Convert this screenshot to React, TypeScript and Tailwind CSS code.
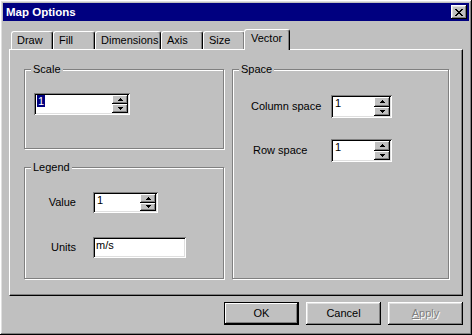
import React from 'react';

const raised =
  'shadow-[inset_-1px_-1px_0_#000,inset_1px_1px_0_#fff,inset_-2px_-2px_0_#808080,inset_2px_2px_0_#dfdfdf]';
const sunken =
  'shadow-[inset_1px_1px_0_#808080,inset_-1px_-1px_0_#fff,inset_2px_2px_0_#000,inset_-2px_-2px_0_#dfdfdf]';

const CloseGlyph = () => (
  <svg width="8" height="7" viewBox="0 0 8 7" shapeRendering="crispEdges">
    <path
      d="M0 0h2v1H0zM6 0h2v1H6zM1 1h2v1H1zM5 1h2v1H5zM2 2h4v1H2zM3 3h2v1H3zM2 4h4v1H2zM1 5h2v1H1zM5 5h2v1H5zM0 6h2v1H0zM6 6h2v1H6z"
      fill="#000"
    />
  </svg>
);

const Arrow = ({ up }: { up: boolean }) => (
  <svg width="5" height="3" viewBox="0 0 5 3" shapeRendering="crispEdges">
    {up ? (
      <path d="M2 0h1v1H2zM1 1h3v1H1zM0 2h5v1H0z" fill="#000" />
    ) : (
      <path d="M0 0h5v1H0zM1 1h3v1H1zM2 2h1v1H2z" fill="#000" />
    )}
  </svg>
);

interface SpinProps {
  width: string;
  height: string;
  value: string;
  selected?: boolean;
}

const SpinEdit: React.FC<SpinProps> = ({ width, height, value, selected }) => (
  <div className={`flex bg-white p-[2px] ${sunken} ${width} ${height}`}>
    <div className="flex-1 pl-[1px] leading-[13px]">
      <span className={selected ? 'bg-[#000080] text-white px-[1px]' : 'px-[1px]'}>{value}</span>
    </div>
    <div className="flex w-[16px] flex-col bg-[#c0c0c0]">
      {[true, false].map((up) => (
        <div
          key={String(up)}
          className="flex flex-1 items-center justify-center shadow-[inset_-1px_-1px_0_#000,inset_1px_1px_0_#fff,inset_-2px_-2px_0_#808080]"
        >
          <Arrow up={up} />
        </div>
      ))}
    </div>
  </div>
);

const GroupBox: React.FC<{ title: string; className: string; children?: React.ReactNode }> = ({
  title,
  className,
  children
}) => (
  <div
    className={`relative border border-[#808080] shadow-[inset_1px_1px_0_#fff,1px_1px_0_#fff] ${className}`}
  >
    <span className="absolute -top-[7px] left-[6px] bg-[#c0c0c0] px-[2px] leading-[13px]">{title}</span>
    {children}
  </div>
);

const tabs = [
  { label: 'Draw', w: 'w-[42px]' },
  { label: 'Fill', w: 'w-[42px]' },
  { label: 'Dimensions', w: 'w-[66px]' },
  { label: 'Axis', w: 'w-[42px]' },
  { label: 'Size', w: 'w-[42px]' }
];

const Button: React.FC<{ label: React.ReactNode; isDefault?: boolean; disabled?: boolean }> = ({
  label,
  isDefault,
  disabled
}) => (
  <div
    className={`flex h-[23px] w-[75px] items-center justify-center bg-[#c0c0c0] ${
      isDefault ? 'border border-black shadow-[inset_-1px_-1px_0_#000,inset_1px_1px_0_#fff,inset_-2px_-2px_0_#808080]' : raised
    } ${disabled ? 'text-[#808080] [text-shadow:1px_1px_0_#fff]' : 'text-black'}`}
  >
    {label}
  </div>
);

export default function App() {
  return (
    <div className="h-[335px] w-[472px] bg-[#c0c0c0] font-['Liberation_Sans',Arial,sans-serif] text-[11px] text-black">
      <div className={`flex h-full w-full flex-col p-[3px] ${raised}`}>
        {/* title bar */}
        <div className="flex h-[18px] items-center justify-between bg-[#000080] pl-[3px] pr-[2px]">
          <span className="text-[11.5px] font-bold leading-[14px] text-white">Map Options</span>
          <div className={`flex h-[14px] w-[16px] items-center justify-center bg-[#c0c0c0] ${raised}`}>
            <CloseGlyph />
          </div>
        </div>

        <div className="ml-[6px] mt-[8px] w-[454px]">
          {/* tabs */}
          <div className="relative z-10 flex h-[20px] items-end pl-[2px]">
            {tabs.map((t) => (
              <div
                key={t.label}
                className={`h-[18px] ${t.w} rounded-t-[3px] border-l border-t border-r border-l-white border-t-white border-r-black bg-[#c0c0c0] pl-[5px] pt-[2px] leading-[13px] shadow-[inset_-1px_0_0_#808080]`}
              >
                {t.label}
              </div>
            ))}
            <div className="-mb-[1px] -ml-[1px] h-[21px] w-[46px] rounded-t-[3px] border-l border-t border-r border-l-white border-t-white border-r-black bg-[#c0c0c0] pl-[6px] pt-[2px] leading-[13px] shadow-[inset_-1px_0_0_#808080]">
              Vector
            </div>
          </div>

          {/* panel */}
          <div className="flex h-[247px] gap-[8px] border border-b-black border-l-white border-r-black border-t-white pl-[14px] pt-[19px] shadow-[inset_-1px_-1px_0_#808080]">
            <div className="flex w-[200px] flex-col">
              <GroupBox title="Scale" className="h-[80px] pl-[9px] pt-[23px]">
                <SpinEdit width="w-[96px]" height="h-[22px]" value="1" selected />
              </GroupBox>
              <GroupBox title="Legend" className="mt-[18px] h-[112px] pt-[24px]">
                <div className="flex items-center">
                  <span className="w-[51px] text-right">Value</span>
                  <div className="ml-[17px]">
                    <SpinEdit width="w-[65px]" height="h-[21px]" value="1" />
                  </div>
                </div>
                <div className="mt-[24px] flex items-center">
                  <span className="w-[51px] text-right">Units</span>
                  <div
                    className={`ml-[17px] h-[21px] w-[93px] bg-white pl-[3px] pt-[2px] leading-[13px] ${sunken}`}
                  >
                    m/s
                  </div>
                </div>
              </GroupBox>
            </div>
            <GroupBox title="Space" className="h-[210px] w-[217px] pt-[25px]">
              <div className="flex items-center">
                <span className="w-[98px] pl-[18px]">Column space</span>
                <SpinEdit width="w-[61px]" height="h-[23px]" value="1" />
              </div>
              <div className="mt-[21px] flex items-center">
                <span className="w-[98px] pl-[20px]">Row space</span>
                <SpinEdit width="w-[61px]" height="h-[23px]" value="1" />
              </div>
            </GroupBox>
          </div>

          {/* buttons */}
          <div className="mt-[6px] flex justify-end gap-[7px]">
            <Button label="OK" isDefault />
            <Button label="Cancel" />
            <Button
              disabled
              label={
                <span>
                  <span className="underline">A</span>pply
                </span>
              }
            />
          </div>
        </div>
      </div>
    </div>
  );
}
